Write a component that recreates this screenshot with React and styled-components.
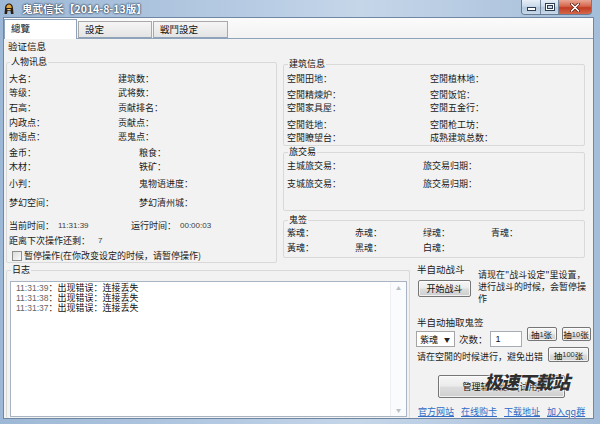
import React from 'react';
import styled, { createGlobalStyle } from 'styled-components';

const FONT = `"Noto Sans CJK SC", "Liberation Sans", sans-serif`;

const Global = createGlobalStyle`
  html, body { margin: 0; padding: 0; background: #fff; }
  body { font-family: ${FONT}; }
  #root { width: 600px; height: 424px; overflow: hidden; }
`;

const Window = styled.div`
  position: relative;
  width: 600px;
  height: 424px;
  display: flex;
  flex-direction: column;
  background: linear-gradient(90deg, #9db8d6 0%, #b9cde4 45%, #c6d6e9 60%, #a4bdd9 100%);
  overflow: hidden;
`;

const TitleBar = styled.div`
  height: 18px;
  display: flex;
  align-items: flex-start;
  padding-left: 4px;
`;

const TitleIcon = styled.svg`
  width: 10px;
  height: 12px;
  margin-top: 3px;
  flex: none;
`;

const TitleText = styled.div`
  margin-left: 8px;
  margin-top: 1px;
  font-size: 10.5px;
  line-height: 16px;
  font-weight: 700;
  color: #fff;
  white-space: nowrap;
  text-shadow: 0 0 2px #24344a, 0 0 2px #24344a;
`;

const CtrlGroup = styled.div`
  display: flex;
  margin-left: auto;
  margin-right: 8px;
  height: 14px;
  border: 1px solid #6a7c93;
  border-top: none;
  border-radius: 0 0 4px 4px;
  overflow: hidden;
`;

const CtrlBtn = styled.div`
  width: ${p => p.$w}px;
  display: flex;
  align-items: center;
  justify-content: center;
  background: ${p => p.$close
    ? 'linear-gradient(180deg, #e9a694 0%, #d5664c 45%, #c13d22 55%, #d6674b 100%)'
    : 'linear-gradient(180deg, #e6eef7 0%, #cad9ea 45%, #b4c8de 55%, #c8d8ea 100%)'};
  & + & { border-left: 1px solid #75879e; }
`;

const Frame = styled.div`
  flex: 1;
  display: flex;
  padding: 0 7px 6px 4px;
  min-height: 0;
`;

const Client = styled.div`
  flex: 1;
  display: flex;
  flex-direction: column;
  background: #f0f0f0;
  box-shadow: 0 0 0 1px #6f87a3;
  min-height: 0;
`;

const TabStrip = styled.div`
  height: 20px;
  display: flex;
  align-items: flex-end;
  background: linear-gradient(180deg, #fbfbfb, #f2f2f2);
  position: relative;
  z-index: 1;
`;

const Tab = styled.div`
  box-sizing: border-box;
  width: ${p => p.$w}px;
  height: ${p => (p.$active ? 20 : 17)}px;
  margin-bottom: ${p => (p.$active ? -1 : 0)}px;
  margin-left: ${p => (p.$active ? 0 : 1)}px;
  padding-left: 6px;
  border: 1px solid ${p => (p.$active ? '#8ea3ba' : '#a9a9a9')};
  border-bottom: ${p => (p.$active ? 'none' : '1px solid #8ea3ba')};
  background: ${p => (p.$active ? '#ffffff' : 'linear-gradient(180deg, #f5f5f5, #e4e4e4)')};
  font-size: 9.5px;
  line-height: ${p => (p.$active ? 17 : 15)}px;
  color: #111;
  white-space: nowrap;
`;

const Panel = styled.div`
  flex: 1;
  display: flex;
  flex-direction: column;
  border-top: 1px solid #8ea3ba;
  padding: 1px 0 0 2px;
  background: #f2f2f2;
  min-height: 0;
`;

const Caption = styled.div`
  margin-left: 2px;
  font-size: 9.5px;
  line-height: 12px;
  height: 12px;
  color: #111;
  white-space: nowrap;
`;

const TopArea = styled.div`
  margin-top: 4px;
  display: grid;
  grid-template-columns: 271px 302px;
  column-gap: 6px;
  align-items: start;
`;

const RightStack = styled.div`
  margin-top: 2px;
  display: flex;
  flex-direction: column;
`;

const Group = styled.fieldset`
  margin: ${p => p.$mt || 0}px 0 0 0;
  min-width: 0;
  padding: ${p => p.$pad};
  border: 1px solid #d9d9d9;
  border-radius: 2px;
  ${p => p.$noBottom && 'border-bottom: none;'}
`;

const Legend = styled.legend`
  padding: 0 1px;
  margin-left: 1px;
  font-size: 9px;
  line-height: 12px;
  color: #111;
  white-space: nowrap;
`;

const Row = styled.div`
  display: grid;
  grid-template-columns: ${p => p.$cols || '1fr'};
  height: ${p => p.$h}px;
  align-items: start;
`;

const Cell = styled.span`
  font-size: 9px;
  line-height: 12px;
  color: #1a1a1a;
  white-space: nowrap;
`;

const Num = styled.span`
  font-family: "Liberation Sans", "DejaVu Sans", sans-serif;
  font-size: 8px;
  line-height: 12px;
  color: #3c3c3c;
  white-space: nowrap;
`;

const CheckRow = styled.label`
  display: flex;
  align-items: center;
  gap: 2px;
  height: 12px;
  margin-left: 3px;
`;

const CheckBox = styled.span`
  width: 8px;
  height: 8px;
  border: 1px solid #8f8f8f;
  background: linear-gradient(135deg, #dcdcdc, #fafafa);
  flex: none;
`;

const BottomArea = styled.div`
  flex: 1;
  margin-top: 1px;
  display: grid;
  grid-template-columns: 404px 1fr;
  column-gap: 3px;
  min-height: 0;
`;

const LogBox = styled.div`
  height: 134px;
  display: flex;
  background: #fff;
  border: 1px solid #a8b4c2;
`;

const LogText = styled.div`
  flex: 1;
  padding: 1px 0 0 5px;
`;

const LogLine = styled.div`
  font-size: 9px;
  line-height: 10px;
  height: 10px;
  color: #111;
  white-space: nowrap;
`;

const LogTime = styled.span`
  font-family: "Liberation Sans", "DejaVu Sans", sans-serif;
  font-size: 8.5px;
  color: #666;
`;

const ScrollBar = styled.div`
  width: 15px;
  display: flex;
  flex-direction: column;
  justify-content: space-between;
  align-items: center;
  background: #fafbfc;
  border-left: 1px solid #eef0f3;
  padding: 3px 0;
  font-size: 5px;
  color: #b8bec6;
  line-height: 6px;
`;

const RightPanel = styled.div`
  margin-top: -1px;
  padding-left: 4px;
  display: flex;
  flex-direction: column;
`;

const FightGrid = styled.div`
  display: grid;
  grid-template-columns: 61px 1fr;
`;

const FightLeft = styled.div`
  display: flex;
  flex-direction: column;
`;

const Note = styled.div`
  padding-top: 6px;
  font-size: 9px;
  line-height: 12px;
  color: #1a1a1a;
  white-space: nowrap;
`;

const Btn = styled.div`
  box-sizing: border-box;
  width: ${p => p.$w}px;
  height: ${p => p.$h}px;
  margin: ${p => p.$m || '0'};
  display: flex;
  align-items: center;
  justify-content: center;
  border: 1px solid #767676;
  border-radius: 2px;
  background: linear-gradient(180deg, #f6f6f6 0%, #ebebeb 48%, #dddddd 52%, #cfcfcf 100%);
  box-shadow: inset 0 0 0 1px rgba(255,255,255,0.7);
  font-size: ${p => p.$fs || 9}px;
  color: #111;
  white-space: nowrap;
  flex: none;
`;

const Small = styled.span`
  font-family: "Liberation Sans", sans-serif;
  font-size: 7.5px;
  color: #333;
`;

const SubTitle = styled.div`
  margin-top: 11px;
  height: 11px;
  font-size: 9.5px;
  line-height: 12px;
  color: #1a1a1a;
  white-space: nowrap;
`;

const DrawRow = styled.div`
  display: flex;
  align-items: flex-start;
  height: ${p => p.$h}px;
`;

const Select = styled.div`
  box-sizing: border-box;
  width: 39px;
  height: 16px;
  margin: 4px 0 0 -1px;
  padding-left: 3px;
  display: flex;
  align-items: center;
  justify-content: space-between;
  background: #fff;
  border: 1px solid #a5a5a5;
  font-size: 9px;
  color: #111;
`;

const Arrow = styled.span`
  font-size: 6px;
  margin-right: 4px;
  color: #222;
`;

const Input = styled.div`
  box-sizing: border-box;
  width: 32px;
  height: 16px;
  margin: 4px 0 0 2px;
  padding-left: 5px;
  background: #fff;
  border: 1px solid #a5acb5;
  font-family: "Liberation Sans", sans-serif;
  font-size: 9px;
  line-height: 14px;
  color: #111;
`;

const InlineText = styled.span`
  margin: ${p => p.$m || '0'};
  font-size: ${p => p.$fs || 9}px;
  line-height: 12px;
  color: #1a1a1a;
  white-space: nowrap;
`;

const Links = styled.div`
  margin-top: 8px;
  margin-left: 1px;
  display: flex;
  gap: 7px;
`;

const Link = styled.a`
  font-size: 9px;
  line-height: 12px;
  color: #2f6bc4;
  text-decoration: underline;
  white-space: nowrap;
  width: 36px;
`;

const Watermark = styled.div`
  position: absolute;
  left: 484px;
  top: 368px;
  font-size: 18px;
  font-weight: 900;
  font-style: italic;
  letter-spacing: -1px;
  color: #2f2f2f;
  text-shadow: 0 0 2px #fff, 0 0 2px #fff;
  white-space: nowrap;
  pointer-events: none;
`;

const leftRows = [
  ['大名：', '建筑数：', 14, '109px 1fr'],
  ['等级：', '武将数：', 15, '109px 1fr'],
  ['石高：', '贡献排名：', 15, '109px 1fr'],
  ['内政点：', '贡献点：', 14, '109px 1fr'],
  ['物语点：', '恶鬼点：', 16, '109px 1fr'],
  ['金币：', '粮食：', 14, '130px 1fr'],
  ['木材：', '铁矿：', 17, '130px 1fr'],
  ['小判：', '鬼物语进度：', 19, '130px 1fr'],
  ['梦幻空间：', '梦幻清州城：', 23, '130px 1fr'],
];

const buildRows = [
  ['空閒田地：', '空閒植林地：', 16],
  ['空閒精煉炉：', '空閒饭馆：', 13],
  ['空閒家具屋：', '空閒五金行：', 17],
  ['空閒鉎地：', '空閒枪工坊：', 13],
  ['空閒瞭望台：', '成熟建筑总数：', 12],
];

const logs = ['11:31:39', '11:31:38', '11:31:37'];

export default function App() {
  return (
    <>
      <Global />
      <Window>
        <TitleBar>
          <TitleIcon viewBox="0 0 10 12">
            <path d="M5 0.5 C2.2 0.5 1 3 1 5.5 L0.5 11 L3 11 L3.5 8 L6.5 8 L7 11 L9.5 11 L9 5.5 C9 3 7.8 0.5 5 0.5 Z" fill="#2a1d12" />
            <path d="M5 1.5 C3.4 1.5 2.4 3 2.3 5 L7.7 5 C7.6 3 6.6 1.5 5 1.5 Z" fill="#e0a63a" />
            <path d="M3.2 6 L6.8 6 L6.5 7.2 L3.5 7.2 Z" fill="#f2d27a" />
          </TitleIcon>
          <TitleText>鬼武信长【2014-8-13版】</TitleText>
          <CtrlGroup>
            <CtrlBtn $w={18}>
              <svg width="9" height="8" viewBox="0 0 9 8">
                <rect x="0.5" y="4.5" width="8" height="3" fill="#fff" stroke="#2e3d52" strokeWidth="1" />
              </svg>
            </CtrlBtn>
            <CtrlBtn $w={17}>
              <svg width="10" height="8" viewBox="0 0 10 8">
                <rect x="0.5" y="0.5" width="9" height="7" fill="#fff" stroke="#2e3d52" strokeWidth="1" />
                <rect x="2.5" y="2.5" width="5" height="3" fill="#c9d8ea" stroke="#2e3d52" strokeWidth="1" />
              </svg>
            </CtrlBtn>
            <CtrlBtn $w={32} $close>
              <svg width="10" height="9" viewBox="0 0 10 9">
                <path d="M1.5 1 L8.5 8 M8.5 1 L1.5 8" stroke="#5a1a10" strokeWidth="3" strokeLinecap="round" />
                <path d="M1.5 1 L8.5 8 M8.5 1 L1.5 8" stroke="#fff" strokeWidth="1.6" strokeLinecap="round" />
              </svg>
            </CtrlBtn>
          </CtrlGroup>
        </TitleBar>
        <Frame>
          <Client>
            <TabStrip>
              <Tab $active $w={73}>總覽</Tab>
              <Tab $w={74}>設定</Tab>
              <Tab $w={75}>戦鬥設定</Tab>
            </TabStrip>
            <Panel>
              <Caption>验证信息</Caption>
              <TopArea>
                <Group $pad="5px 2px 0 2px">
                  <Legend>人物讯息</Legend>
                  {leftRows.map(([a, b, h, cols]) => (
                    <Row key={a} $h={h} $cols={cols}>
                      <Cell>{a}</Cell>
                      <Cell>{b}</Cell>
                    </Row>
                  ))}
                  <Row $h={15} $cols="49px 73px 49px 1fr">
                    <Cell>当前时间：</Cell>
                    <Num>11:31:39</Num>
                    <Cell>运行时间：</Cell>
                    <Num>00:00:03</Num>
                  </Row>
                  <Row $h={15} $cols="89px 1fr">
                    <Cell>距离下次操作还剩：</Cell>
                    <Num>7</Num>
                  </Row>
                  <CheckRow>
                    <CheckBox />
                    <Cell>暂停操作(在你改变设定的时候，请暂停操作)</Cell>
                  </CheckRow>
                </Group>
                <RightStack>
                  <Group $pad="3px 3px 1px 3px">
                    <Legend>建筑信息</Legend>
                    {buildRows.map(([a, b, h]) => (
                      <Row key={a} $h={h} $cols="143px 1fr">
                        <Cell>{a}</Cell>
                        <Cell>{b}</Cell>
                      </Row>
                    ))}
                  </Group>
                  <Group $pad="2px 3px 20px 3px">
                    <Legend>旅交易</Legend>
                    <Row $h={18} $cols="136px 1fr">
                      <Cell>主城旅交易：</Cell>
                      <Cell>旅交易归期：</Cell>
                    </Row>
                    <Row $h={12} $cols="136px 1fr">
                      <Cell>支城旅交易：</Cell>
                      <Cell>旅交易归期：</Cell>
                    </Row>
                  </Group>
                  <Group $mt={3} $pad="1px 3px 3px 3px">
                    <Legend>鬼签</Legend>
                    <Row $h={15} $cols="68px 68px 68px 1fr">
                      <Cell>紫魂：</Cell>
                      <Cell>赤魂：</Cell>
                      <Cell>绿魂：</Cell>
                      <Cell>青魂：</Cell>
                    </Row>
                    <Row $h={12} $cols="68px 68px 68px 1fr">
                      <Cell>黃魂：</Cell>
                      <Cell>黑魂：</Cell>
                      <Cell>白魂：</Cell>
                    </Row>
                  </Group>
                </RightStack>
              </TopArea>
              <BottomArea>
                <Group $pad="5px 2px 0 3px" $noBottom>
                  <Legend>日志</Legend>
                  <LogBox>
                    <LogText>
                      {logs.map(t => (
                        <LogLine key={t}>
                          <LogTime>{t}</LogTime>：出现错误：连接丢失
                        </LogLine>
                      ))}
                    </LogText>
                    <ScrollBar>
                      <span>▲</span>
                      <span>▼</span>
                    </ScrollBar>
                  </LogBox>
                </Group>
                <RightPanel>
                  <FightGrid>
                    <FightLeft>
                      <InlineText $fs={9.5}>半自动战斗</InlineText>
                      <Btn $w={53} $h={17} $m="5px 0 0 1px">开始战斗</Btn>
                    </FightLeft>
                    <Note>
                      请现在"战斗设定"里设置，<br />
                      进行战斗的时候，会暂停操<br />
                      作
                    </Note>
                  </FightGrid>
                  <SubTitle>半自动抽取鬼签</SubTitle>
                  <DrawRow $h={20}>
                    <Select>紫魂<Arrow>▼</Arrow></Select>
                    <InlineText $m="6px 0 0 4px" $fs={9.5}>次数：</InlineText>
                    <Input>1</Input>
                    <Btn $w={30} $h={14} $m="0 0 0 5px" $fs={8.5}>抽<Small>1</Small>张</Btn>
                    <Btn $w={29} $h={14} $m="0 0 0 5px" $fs={8.5}>抽<Small>10</Small>张</Btn>
                  </DrawRow>
                  <DrawRow $h={15}>
                    <InlineText $m="4px 0 0 0">请在空閒的时候进行，避免出错</InlineText>
                    <Btn $w={41} $h={15} $m="0 4px 0 auto" $fs={8.5}>抽<Small>100</Small>张</Btn>
                  </DrawRow>
                  <Btn $w={127} $h={23} $m="13px 0 0 21px">管理辅助程序(试用)</Btn>
                  <Links>
                    <Link>官方网站</Link>
                    <Link>在线购卡</Link>
                    <Link>下载地址</Link>
                    <Link>加入qq群</Link>
                  </Links>
                </RightPanel>
              </BottomArea>
            </Panel>
          </Client>
        </Frame>
        <Watermark>极速下载站</Watermark>
      </Window>
    </>
  );
}
